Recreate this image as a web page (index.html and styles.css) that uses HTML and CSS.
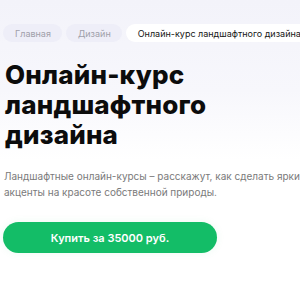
FILE: index.html
```html
<!DOCTYPE html>
<html lang="ru">
<head>
    <meta charset="UTF-8">
    <meta name="viewport" content="width=device-width, initial-scale=1.0">
    <title>Онлайн-курс ландшафтного дизайна</title>
    <link rel="stylesheet" href="styles.css">
</head>
<body>
    <div class="page">
        <nav class="crumbs">
            <a href="#" class="crumb">Главная</a>
            <a href="#" class="crumb">Дизайн</a>
            <span class="crumb current">Онлайн-курс ландшафтного дизайна</span>
        </nav>

        <h1 class="title">Онлайн-курс ландшафтного дизайна</h1>

        <p class="lead">Ландшафтные онлайн-курсы – расскажут, как сделать яркие акценты на красоте собственной природы.</p>

        <a href="#" class="buy">Купить за 35000 руб.</a>
    </div>
</body>
</html>
```

FILE: styles.css
```css
html, body {
    margin: 0;
    height: 100%;
}

body {
    background: linear-gradient(180deg, #f3f3fa 0px, #f7f7fc 90px, #ffffff 160px);
    font-family: 'Inter', 'Noto Sans', sans-serif;
    color: #111;
    overflow: hidden;
}

.page {
    width: 320px;
    padding: 24px 0 0 3px;
}

.crumbs {
    display: flex;
    gap: 4px;
    white-space: nowrap;
}

.crumb {
    display: inline-flex;
    align-items: center;
    height: 18px;
    padding: 0 11px 0 12px;
    border-radius: 9px;
    background-color: #eeeef8;
    color: #a0a0aa;
    font-size: 9px;
    text-decoration: none;
}

.crumb.current {
    background-color: #ffffff;
    color: #151515;
    padding-left: 12px;
}

.title {
    margin: 18px 0 0 2px;
    width: 260px;
    font-size: 26px;
    font-weight: 800;
    line-height: 30px;
    letter-spacing: 0.2px;
    color: #0c0c0c;
}

.lead {
    margin: 18px 0 0 1px;
    font-size: 10px;
    line-height: 16px;
    color: #7a7a7a;
}

.buy {
    display: flex;
    justify-content: center;
    align-items: center;
    width: 214px;
    height: 31px;
    margin-top: 22px;
    border-radius: 16px;
    background-color: #13bd67;
    color: #ffffff;
    font-size: 11px;
    font-weight: 600;
    text-decoration: none;
    box-shadow: 0 0 8px rgba(19, 189, 103, 0.08);
}
```
